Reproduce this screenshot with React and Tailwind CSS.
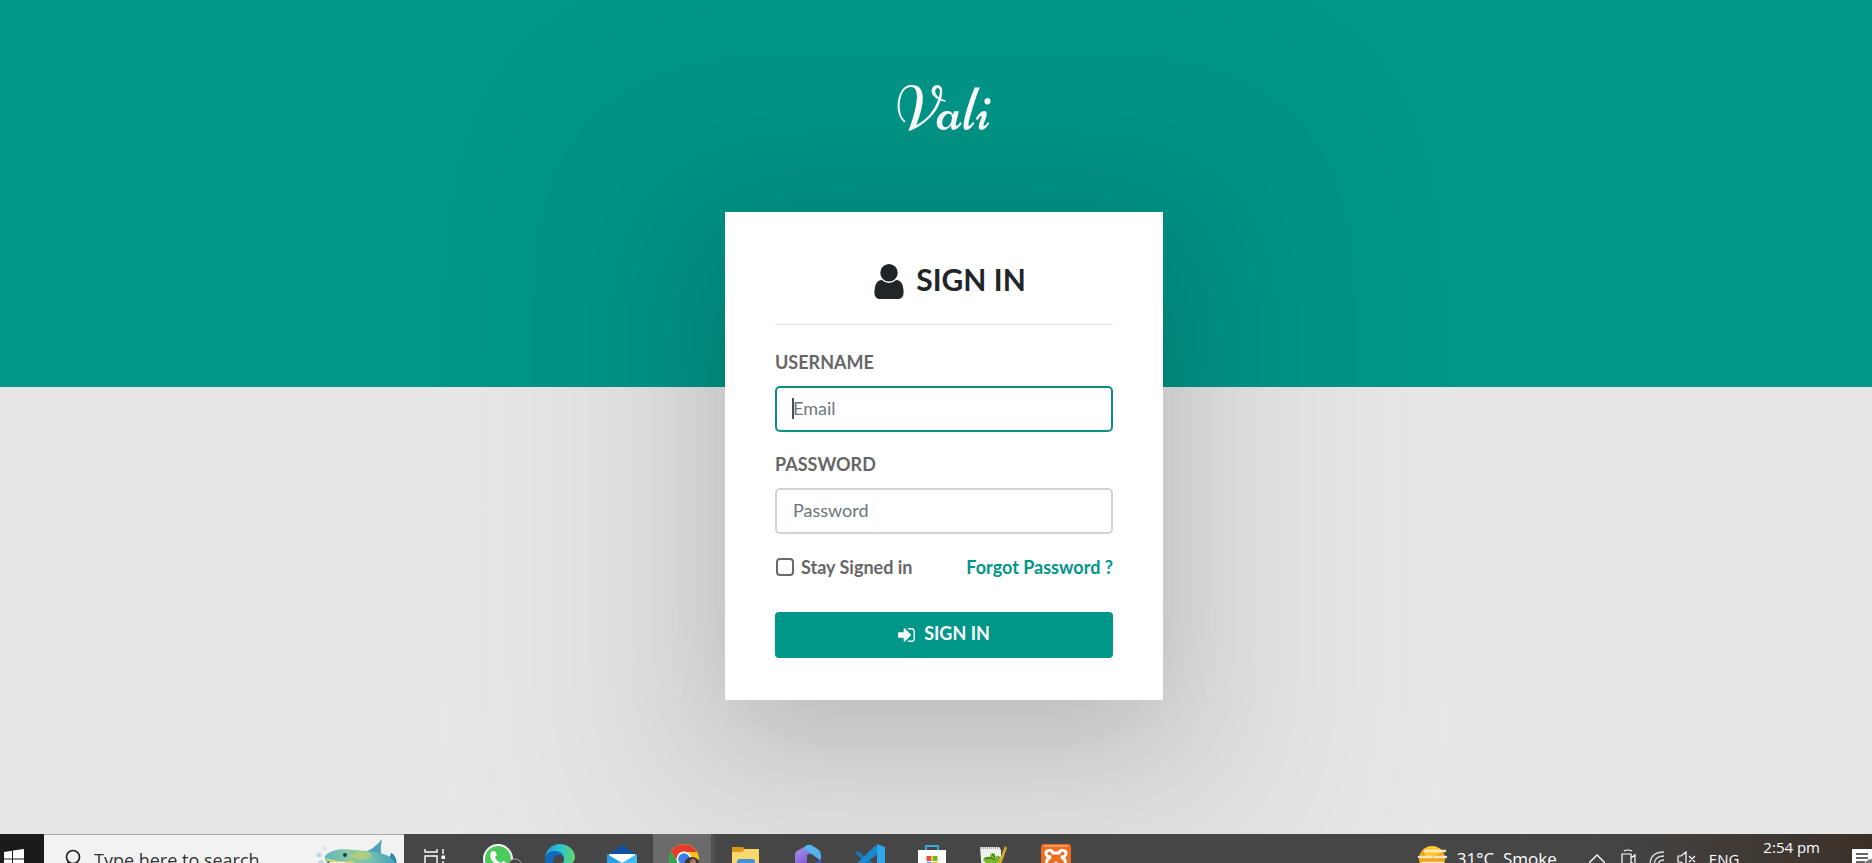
import React from "react";

const inputBase =
  "block h-[46px] w-full rounded-[5px] border-2 bg-white px-4 pb-0.5 text-[18px] text-[#495057] placeholder:text-[#6c757d] placeholder:opacity-100 outline-none";

function UserIcon() {
  return (
    <svg aria-hidden="true" viewBox="256 128 1280 1536" className="mt-0.5 h-[35px] w-[30px]" fill="currentColor">
      <path d="M1536 1399q0 109-62.5 187t-150.5 78h-854q-88 0-150.5-78t-62.5-187q0-85 8.5-160.5t31.5-152 58.5-131 94-89 134.5-34.5q131 128 313 128t313-128q76 0 134.5 34.5t94 89 58.5 131 31.5 152 8.5 160.5zm-256-887q0 159-112.5 271.5t-271.5 112.5-271.5-112.5-112.5-271.5 112.5-271.5 271.5-112.5 271.5 112.5 112.5 271.5z" />
    </svg>
  );
}

function EnterIcon() {
  return (
    <svg aria-hidden="true" viewBox="128 256 1536 1280" className="mt-1 h-[14px] w-[17px]" fill="currentColor">
      <path d="M1312 896q0 26-19 45l-544 544q-19 19-45 19t-45-19-19-45v-288h-448q-26 0-45-19t-19-45v-384q0-26 19-45t45-19h448v-288q0-26 19-45t45-19 45 19l544 544q19 19 19 45zm352-352v704q0 119-84.5 203.5t-203.5 84.5h-320q-13 0-22.5-9.5t-9.5-22.5q0-4-1-20t-.5-26.5 3-23.5 10-19.5 20.5-6.5h320q66 0 113-47t47-113v-704q0-66-47-113t-113-47h-312l-11.5-1-11.5-3-8-5.5-7-9-2-13.5q0-4-1-20t-.5-26.5 3-23.5 10-19.5 20.5-6.5h320q119 0 203.5 84.5t84.5 203.5z" />
    </svg>
  );
}

function SharkArt() {
  return (
    <svg aria-hidden="true" viewBox="0 0 84 46" className="h-[46px] w-[84px]">
      <defs>
        <linearGradient id="shark" x1="0" y1="0" x2="1" y2="0">
          <stop offset="0" stopColor="#5cb6c6" />
          <stop offset=".35" stopColor="#8cc9a0" />
          <stop offset=".6" stopColor="#7dc3b0" />
          <stop offset="1" stopColor="#3f9fb8" />
        </linearGradient>
      </defs>
      <path d="M49 13C57 10 62 5 66 0c-1 6-2 11 0 17z" fill="#4ba3bb" />
      <path d="M74 17c1-2 1-3 0-3 3 0 4 2 5 4 2 3 2 6 1 12h-8z" fill="#3389a3" />
      <path d="M9 17C14 11 25 9 38 11c17 1 30 3 36 7 4 3 6 8 6 12H16C13 26 8 21 9 17z" fill="url(#shark)" />
      <path d="M38 14c8-3 16-1 17 2s-6 6-14 4-8-4-3-6z" fill="#b9cf74" opacity=".8" />
      <path d="M11 20c9 3 17 3 26 3l-3 7H16c-3-3-5-7-5-10z" fill="#246f87" />
      <path d="M10 19c9 3 18 4 28 3l-1 2c-9 1-18 0-26-2z" fill="#d9d36c" />
      <path d="M13 23l2 3 2-3 2 3 2-3 2 3 2-3 2 3 2-3" fill="#fff" />
      <circle cx="29" cy="16" r="2" fill="#1d3b49" />
      <circle cx="3" cy="16" r="2.5" fill="#b5dce7" />
      <circle cx="9" cy="9" r="2" fill="#d3e5ea" />
      <circle cx="5" cy="24" r="3" fill="#b5dce7" />
      <path d="M16 30h64v16H16z" fill="#4ba3bb" />
    </svg>
  );
}

const icon = "h-[30px] w-[30px]";

const apps = [
  {
    name: "Task View",
    art: (
      <svg viewBox="0 0 30 30" className={icon} fill="none" stroke="#fff" strokeWidth="1.4">
        <path d="M4 5v3h12V5M4 12h12v12H4zM4 30v-3h12v3M22 5v5M22 17v10" />
        <path d="M20.500 11.500h3.500v3.500h-3.500z" fill="#fff" stroke="none" />
      </svg>
    ),
  },
  {
    name: "WhatsApp",
    art: (
      <svg viewBox="0 0 30 30" className="h-[30px] w-[30px] overflow-visible">
        <circle cx="15" cy="15" r="15" fill="#fff" />
        <circle cx="15" cy="15" r="13" fill="#4ccb5d" />
        <path d="M9 7c-3 3-2 8 2 12s8 6 12 3c1-1 1-3 1-3l-4-2-2 2c-3-1-5-3-6-6l2-2-2-4z" fill="#fff" />
        <circle cx="32" cy="22" r="7" fill="#464646" stroke="#a5a5a5" />
      </svg>
    ),
  },
  {
    name: "Edge",
    art: (
      <svg viewBox="0 0 30 30" className={icon}>
        <defs>
          <linearGradient id="edge" x1="0" x2="1">
            <stop offset="0" stopColor="#2199df" />
            <stop offset=".5" stopColor="#2bc3d2" />
            <stop offset="1" stopColor="#68d866" />
          </linearGradient>
        </defs>
        <path d="M0 15C0 6 7 0 15 0s15 6 15 13c0 5-4 8-9 8-3 0-4-1-4-2 2-1 2-2 2-4 0-4-4-7-9-7S0 12 0 15z" fill="url(#edge)" />
        <path d="M0 15c0-5 5-8 10-8 6 0 9 4 9 8 0-2-2-4-5-4-5 0-7 5-5 10 2 4 7 6 13 4-2 3-5 5-9 5C5 30 0 23 0 15z" fill="#1269b8" />
      </svg>
    ),
  },
  {
    name: "Mail",
    art: (
      <svg viewBox="0 0 30 30" className={icon}>
        <path d="M0 11 15 1l15 10v4H0z" fill="#0f4fa0" />
        <path d="M2 10h26v12H2z" fill="#fff" />
        <path d="M0 10l15 9v11H0z" fill="#2b9de4" />
        <path d="M30 10 15 19 0 29v1h30z" fill="#43b9f2" />
      </svg>
    ),
  },
  {
    name: "Chrome",
    active: true,
    art: (
      <svg viewBox="0 0 30 30" className={icon}>
        <circle cx="15" cy="15" r="15" fill="#fbc116" />
        <path d="M2 7.500A15 15 0 0 1 28 8H15a7 7 0 0 0-6 11z" fill="#e33b2e" />
        <path d="M2 7.500A15 15 0 0 0 14 30l6-10-11-1z" fill="#32a350" />
        <circle cx="15" cy="15" r="7.500" fill="#fff" />
        <circle cx="15" cy="15" r="5.800" fill="#3b7de9" />
        <circle cx="23" cy="21" r="8" fill="#3e3632" />
        <circle cx="24" cy="18" r="3" fill="#a57864" />
      </svg>
    ),
  },
  {
    name: "File Explorer",
    art: (
      <svg viewBox="0 0 30 30" className={icon}>
        <path d="M1 3h11l2 2v6H1z" fill="#d79b16" />
        <path d="M1 8h10l3-3h14v23H1z" fill="#fbd76d" />
        <path d="M6 28V18q0-3 3-3h12q3 0 3 3v10z" fill="#3e93d8" />
      </svg>
    ),
  },
  {
    name: "Microsoft 365",
    art: (
      <svg viewBox="0 0 30 30" className={icon}>
        <defs>
          <linearGradient id="m365" x1="0" y1="0" x2=".5" y2="1">
            <stop offset="0" stopColor="#a9a2ee" />
            <stop offset="1" stopColor="#7646ce" />
          </linearGradient>
        </defs>
        <path d="M15 1 4 7q-2 1-2 4v10q0 3 3 5l9-6V11l8-4z" fill="url(#m365)" />
        <path d="M14 1q3-1 6 1l6 4q2 2 2 5v6l-8-6-8-5q-2-3 2-5z" fill="#52b4ea" />
        <path d="M28 15v6q0 3-3 5l-8 4-9-5 14-6z" fill="#3655c9" />
      </svg>
    ),
  },
  {
    name: "Visual Studio Code",
    art: (
      <svg viewBox="0 0 30 30" className={icon}>
        <path d="M0 9l3-2 20 16v7z" fill="#1675b6" />
        <path d="M0 21 21 1l3 8L3 24z" fill="#1b88cc" />
        <path d="M22 0l8 3v24l-8 3z" fill="#2da6ee" />
      </svg>
    ),
  },
  {
    name: "Microsoft Store",
    art: (
      <svg viewBox="0 0 30 30" className={icon}>
        <path d="M9 8V2h12v6" fill="none" stroke="#39a8dc" strokeWidth="2" />
        <path d="M1 6h28v20q0 3-3 3H4q-3 0-3-3z" fill="#fff" />
        <path d="M9.500 12h5v5h-5z" fill="#e8502a" />
        <path d="M15.500 12h5v5h-5z" fill="#7ab51d" />
        <path d="M9.500 18h5v5h-5z" fill="#2a9fd8" />
        <path d="M15.500 18h5v5h-5z" fill="#f5b81c" />
      </svg>
    ),
  },
  {
    name: "Notepad++",
    art: (
      <svg viewBox="0 0 30 30" className={icon}>
        <path d="M1 3h19l2 3v22H3z" fill="#eef1ee" />
        <path d="M2 4h18" stroke="#a9aaa9" strokeWidth="2" strokeDasharray="1 1" />
        <path d="M4 16q1-4 7-3 0-4 3-4t2 4q4-3 6 1-2 6-6 6-9 1-12-4z" fill="#78b72a" />
        <path d="M6 15q5-3 10 1M13 10l3 3" stroke="#27521b" fill="none" />
        <path d="M26 2 18 22l-1 5 4-4L28 4z" fill="#d7a92e" />
      </svg>
    ),
  },
  {
    name: "XAMPP",
    art: (
      <svg viewBox="0 0 30 30" className={icon}>
        <rect width="30" height="30" rx="3" fill="#ea6d22" />
        <path d="M3 2h24" stroke="#f4a673" strokeWidth="1.500" />
        <path d="M10 13c-3 0-5-1-5-4s6-4 7 0h6c1-4 7-3 7 0s-2 4-5 4c6 2 6 11 0 11s-4-5-5-5-1 5-5 5c-6 0-6-9 0-11z" fill="none" stroke="#fff" strokeWidth="3" />
      </svg>
    ),
  },
];

function Taskbar() {
  return (
    <footer className="h-[29px] shrink-0 overflow-hidden bg-linear-to-r from-[#464646] from-85% to-[#3a3028] font-['Open_Sans','Noto_Sans',sans-serif] text-white">
      <div className="flex h-[50px] items-center">
        <button aria-label="Start" className="flex h-full w-11 shrink-0 items-center bg-[#1b1b1b] pl-1">
          <svg aria-hidden="true" viewBox="0 0 20 20" className="h-5 w-5" fill="#fff">
            <path d="M0 3l8-1.200V9.500H0zM9 1.600 20 0v9.500H9zM0 10.500h8v7.700L0 17zM9 10.500h11V20L9 18.400z" />
          </svg>
        </button>
        <label className="flex h-full w-[360px] shrink-0 items-center border-t border-[#ababab] bg-[#f2f2f2] pl-5">
          <svg aria-hidden="true" viewBox="0 0 18 22" className="h-[22px] w-[18px] shrink-0" fill="none" stroke="#222" strokeWidth="1.700">
            <circle cx="9" cy="8" r="6.500" />
            <path d="M4.500 13 0 20" />
          </svg>
          <input
            type="text"
            aria-label="Search"
            placeholder="Type here to search"
            className="ml-3 h-8 w-0 flex-1 text-[18px] text-[#333] placeholder:text-[#333] placeholder:opacity-100 outline-none"
          />
          <span className="mr-1 flex h-full items-start pt-1">
            <SharkArt />
          </span>
        </label>
        <nav aria-label="Applications" className="ml-px flex h-full">
          {apps.map((app) => (
            <button
              key={app.name}
              aria-label={app.name}
              className={
                app.active
                  ? "flex h-full w-[62px] items-center justify-center border-r-4 border-[#505050] bg-[#6b6b6b] pl-1"
                  : "flex h-full w-[62px] items-center justify-center"
              }
            >
              {app.art}
            </button>
          ))}
        </nav>
        <div className="ml-auto flex h-full items-center">
          <button className="flex items-center gap-[10px] text-[17px] whitespace-pre">
            <svg aria-hidden="true" viewBox="0 0 30 28" className="h-7 w-[30px]">
              <circle cx="15" cy="14" r="13" fill="#f5a51b" />
              <path d="M6 5A13 13 0 0 1 26 7L10 14z" fill="#ffc928" />
              <path d="M8 6h20M2 12h13M18 12h11M5 18h21M1 23h18" stroke="#f5e7c8" strokeWidth="2.500" strokeLinecap="round" />
            </svg>
            {"31°C  Smoke"}
          </button>
          <div className="ml-8 flex items-center gap-3">
            <svg aria-hidden="true" viewBox="0 0 16 16" className="mr-1 h-4 w-4" fill="none" stroke="#fff" strokeWidth="1.400">
              <path d="M0 12 8 4l8 8" />
            </svg>
            <svg aria-hidden="true" viewBox="0 0 16 20" className="h-5 w-4" fill="none" stroke="#fff" strokeWidth="1.200">
              <path d="M3 2q4-2 8 0M1 5h9v13H1zM10 9l4-3v10l-4-3" />
            </svg>
            <svg aria-hidden="true" viewBox="0 0 16 16" className="h-4 w-4" fill="none" stroke="#ddd" strokeWidth="1.300">
              <path d="M1 14Q1 1 15 1M5 15Q5 5 15 5M9 15q0-6 6-6" />
              <circle cx="14" cy="14" r="1.500" fill="#ddd" />
            </svg>
            <svg aria-hidden="true" viewBox="0 0 20 16" className="h-4 w-5" fill="none" stroke="#fff" strokeWidth="1.200">
              <path d="M1 5h3l5-4v14l-5-4H1zM12 5l6 6M18 5l-6 6" />
            </svg>
            <span className="text-[15px]">ENG</span>
          </div>
          <time className="ml-6 self-start pt-1 text-[15px] leading-[18px]">2:54 pm</time>
          <svg aria-hidden="true" viewBox="0 0 20 20" className="ml-8 h-5 w-5">
            <path d="M0 0h20v20H0z" fill="#fff" />
            <path d="M4 5h12M4 9h12M4 13h9" stroke="#333" strokeWidth="1.300" />
            <circle cx="20" cy="18" r="8" fill="#777" />
          </svg>
        </div>
      </div>
    </footer>
  );
}

export default function App() {
  return (
    <div className="flex min-h-screen flex-col font-['Lato',sans-serif]">
      <main className="flex flex-1 flex-col items-center overflow-hidden bg-[#e7e7e7] bg-linear-to-b from-[#009688] from-[387px] to-[#e7e7e7] to-[387px] pt-[70px] pb-10 pl-4">
        <h1 className="mb-[62px] font-['Niconne','Liberation_Serif',serif] text-[64px] leading-[80px] font-normal text-white">Vali</h1>
        <form
          onSubmit={(event) => event.preventDefault()}
          className="w-full max-w-[438px] bg-white px-[50px] pt-[50px] pb-[42px] text-[18px] leading-[26px] text-[#666] shadow-[0_36px_184px_144px_rgba(0,0,0,0.05),0_36px_119px_0_rgba(0,0,0,0.16)]"
        >
          <h2 className="flex h-[63px] items-start justify-center gap-3 border-b border-[#ddd] pl-3 text-[30px] leading-[34px] font-bold text-[#212529]">
            <UserIcon />
            SIGN IN
          </h2>
          <label htmlFor="username" className="mt-6 mb-[11px] block font-bold">
            USERNAME
          </label>
          <div className="relative">
            <input id="username" type="text" placeholder="Email" className={`${inputBase} border-[#0b8f82]`} />
            <span aria-hidden="true" className="absolute top-3 left-[17px] h-[21px] w-[2px] bg-[#495057]" />
          </div>
          <label htmlFor="password" className="mt-[19px] mb-[11px] block font-bold">
            PASSWORD
          </label>
          <input id="password" type="password" placeholder="Password" className={`${inputBase} border-[#d0d2d6]`} />
          <div className="mt-5 flex items-center justify-between font-bold">
            <label className="flex items-center gap-[7px] pl-px">
              <input type="checkbox" className="h-[18px] w-[18px] appearance-none rounded-[4px] border-2 border-[#6b6b6b] bg-white checked:bg-[#009688]" />
              Stay Signed in
            </label>
            <a href="#forgot" className="text-[#009688]">
              Forgot Password ?
            </a>
          </div>
          <button type="submit" className="mt-8 flex h-[46px] w-full items-center justify-center gap-[9px] rounded-[4px] bg-[#009688] pb-1 font-bold text-white">
            <EnterIcon />
            SIGN IN
          </button>
        </form>
      </main>
      <Taskbar />
    </div>
  );
}
